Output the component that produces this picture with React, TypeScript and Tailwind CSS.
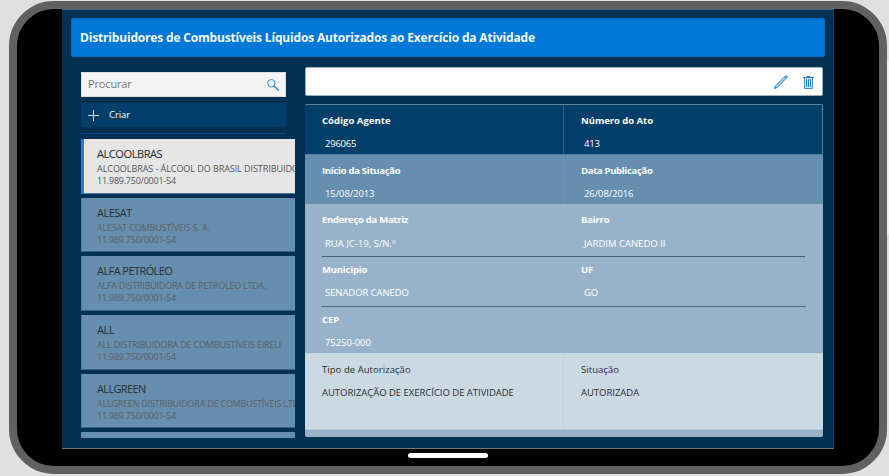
import React from "react";

type Item = { name: string; company: string; nameCls: string; companyCls: string };

const items: Item[] = [
  { name: "ALCOOLBRAS", company: "ALCOOLBRAS - ÁLCOOL DO BRASIL DISTRIBUIDORA", nameCls: "tracking-[-0.42px]", companyCls: "tracking-[-0.06px]" },
  { name: "ALESAT", company: "ALESAT COMBUSTÍVEIS S. A.", nameCls: "tracking-[-0.5px]", companyCls: "tracking-[-0.16px]" },
  { name: "ALFA PETRÓLEO", company: "ALFA DISTRIBUIDORA DE PETRÓLEO LTDA.", nameCls: "tracking-[-0.57px]", companyCls: "tracking-[-0.22px]" },
  { name: "ALL", company: "ALL DISTRIBUIDORA DE COMBUSTÍVEIS EIRELI", nameCls: "tracking-[-0.4px]", companyCls: "tracking-[-0.18px]" },
  { name: "ALLGREEN", company: "ALLGREEN DISTRIBUIDORA DE COMBUSTÍVEIS LTDA.", nameCls: "tracking-[-0.65px]", companyCls: "tracking-[-0.22px]" },
];

function ListItem({ item, selected }: { item: Item; selected: boolean }) {
  return (
    <div
      className={
        "h-[54.7px] shrink-0 overflow-hidden whitespace-nowrap border-b pt-[7px] " +
        (selected
          ? "border-b-[#50809f] border-l-[3px] border-l-[#1a82dc] bg-[#e6e6e6] pl-[13px]"
          : "border-b-[#39658a] border-l border-l-[#4f7ea3] bg-[#668eae] pl-[15px]")
      }
    >
      <div className={"text-[11px] leading-4 " + (selected ? "text-[#222] " : "text-[#2b2f33] ") + item.nameCls}>{item.name}</div>
      <div className={"text-[9px] leading-[13px] " + (selected ? "text-[#555] " : "text-[#5c6167] ") + item.companyCls}>{item.company}</div>
      <div className={"text-[9px] leading-3 tracking-[-0.23px] " + (selected ? "text-[#555]" : "text-[#5c6167]")}>11.989.750/0001-54</div>
    </div>
  );
}

type FieldProps = {
  label: string;
  value: string;
  wide?: boolean;
  divider?: boolean;
  labelCls: string;
  valueCls: string;
};

function Field({ label, value, wide, divider, labelCls, valueCls }: FieldProps) {
  return (
    <div className={(wide ? "w-[259px] " : "flex-1 ") + "pl-[17px] " + (divider ? "border-r border-[#88aac4]/30" : "")}>
      <div className={"text-[9.5px] font-bold leading-4 " + labelCls}>{label}</div>
      <div className={"pl-[3px] text-[9.5px] font-medium leading-4 " + valueCls}>{value}</div>
    </div>
  );
}

export default function App() {
  return (
    <div className="relative h-[476px] w-[889px] overflow-hidden bg-[#e0e0e0] pl-[9px] pt-px font-['Open_Sans','Noto_Sans',sans-serif]">
      <div className="absolute right-0 top-[61px] h-[173px] w-[2px] bg-[#f1f1f1]" />
      <div className="h-[473px] w-[878px] overflow-hidden rounded-[45px] border-8 border-[#616161] bg-black">
        <div className="ml-[45px] flex h-[440px] w-[772px] flex-col border-b border-r border-t border-b-[#777] border-r-[#123f62] border-t-[#456984] bg-[#003052] pl-[9px] pr-[8px] pt-[8px]">
          <header className="flex h-[39px] shrink-0 items-center rounded-[2px] border border-[#0068ba] bg-[#0078d7] pl-[8px] text-[12px] font-bold tracking-[-0.175px] text-[#f3f8fd]">
            Distribuidores de Combustíveis Líquidos Autorizados ao Exercício da Atividade
          </header>
          <div className="flex">
            <aside className="ml-[10px] mt-[15px] w-[214px] shrink-0">
              <div className="flex h-[25px] w-[205px] items-center border border-[#d8dde2] bg-[#f4f4f4] pl-[6px] pr-[5px] text-[11px] text-[#747474]">
                <span className="flex-1 tracking-[-0.15px]">Procurar</span>
                <svg width="14" height="14" viewBox="0 0 14 14" fill="none" stroke="#2f8ad6" strokeWidth="1">
                  <circle cx="5.4" cy="5.2" r="3.7" />
                  <path d="M8.2 8 L13 12.7" strokeWidth="1.3" />
                </svg>
              </div>
              <div className="mt-[6px] flex h-[24px] w-[205px] items-center rounded-[2px] bg-[#003f69] pl-[7px] text-[9.5px] font-medium text-white">
                <svg width="11" height="11" viewBox="0 0 11 11" stroke="#c9d8e3" strokeWidth="1">
                  <path d="M5.5 0V11M0 5.5H11" />
                </svg>
                <span className="ml-[10px] tracking-[-0.1px]">Criar</span>
              </div>
              <div className="mt-[6px] h-px w-[205px] bg-[#004c86]" />
              <div className="mt-[5px] flex h-[299px] flex-col gap-[4px] overflow-hidden">
                {items.map((item, i) => (
                  <ListItem key={item.name} item={item} selected={i === 0} />
                ))}
                <div className="h-[10px] shrink-0 bg-[#668eae]" />
              </div>
            </aside>
            <main className="ml-[10px] mt-[10px] w-[518px]">
              <div className="flex h-[29px] items-center justify-end gap-[15px] rounded-[2px] border border-[#9fb0be] bg-white pr-[8px]">
                <svg width="14" height="14" viewBox="0 0 14 14" fill="#b8d9f3" stroke="#1f80d3" strokeWidth="1">
                  <path d="M.6 13.4 L1 11.5 L11.6 .9 Q12.4 .3 13.1 .9 Q13.7 1.6 13.1 2.4 L2.5 13 Z" />
                  <path d="M10.8 1.7 L12.3 3.2 M1 11.5 L2.5 13" />
                </svg>
                <svg width="11" height="14" viewBox="0 0 11 14">
                  <path d="M1.5 2.5H9.5V13.5H1.5Z" fill="#d5e8f8" stroke="#3a90db" />
                  <path d="M0 2.5H11M4 1.5H7" fill="none" stroke="#1a7dd2" />
                  <path d="M3.5 4V12M5.5 4V12M7.5 4V12" fill="none" stroke="#1a7dd2" />
                </svg>
              </div>
              <div className="mt-[8px] h-[333px] overflow-hidden rounded-[2px] bg-[#98b3c9] text-white">
                <section className="flex h-[50px] border-t border-[#5f829c] bg-[#003f69] shadow-[inset_-1px_0_0_#5f829c]">
                  <Field label="Código Agente" value="296065" wide divider labelCls="pt-[8px] tracking-[0.04px]" valueCls="pt-[7px] tracking-[-0.24px]" />
                  <Field label="Número do Ato" value="413" labelCls="pt-[8px] tracking-[-0.04px]" valueCls="pt-[7px] tracking-[-0.24px]" />
                </section>
                <section className="flex h-[50px] border-t border-[#5280a3] bg-[#668eae]">
                  <Field label="Início da Situação" value="15/08/2013" wide divider labelCls="pt-[8px] tracking-[-0.28px]" valueCls="pt-[7px] tracking-[-0.1px]" />
                  <Field label="Data Publicação" value="26/08/2016" labelCls="pt-[8px] tracking-[-0.32px]" valueCls="pt-[7px] tracking-[-0.1px]" />
                </section>
                <section className="flex h-[52px]">
                  <Field label="Endereço da Matriz" value="RUA JC-19, S/N.º" wide labelCls="pt-[8px] tracking-[-0.28px]" valueCls="pt-[8px]" />
                  <Field label="Bairro" value="JARDIM CANEDO II" labelCls="pt-[8px] tracking-[-0.2px]" valueCls="pt-[8px]" />
                </section>
                <div className="ml-[17px] h-px w-[483px] bg-[#465c6c]" />
                <section className="flex h-[49px]">
                  <Field label="Municipio" value="SENADOR CANEDO" wide labelCls="pt-[5px] tracking-[-0.2px]" valueCls="pt-[7px] tracking-[-0.08px]" />
                  <Field label="UF" value="GO" labelCls="pt-[5px] tracking-[-0.1px]" valueCls="pt-[7px] tracking-[-0.08px]" />
                </section>
                <div className="ml-[16px] h-px w-[485px] bg-[#566d7d]" />
                <section className="flex h-[46px]">
                  <Field label="CEP" value="75250-000" wide labelCls="pt-[5px] tracking-[-0.1px]" valueCls="pt-[7px] tracking-[-0.08px]" />
                </section>
                <section className="flex h-[77px] border-b border-[#b3c7d7] bg-[#cbd9e3] text-[9.5px] leading-4 text-[#2d2d2d]">
                  <div className="w-[259px] border-r border-[#bfd0dc] pl-[17px] pt-[9px]">
                    <div className="font-medium tracking-[0.05px]">Tipo de Autorização</div>
                    <div className="pt-[7px] tracking-[-0.03px]">AUTORIZAÇÃO DE EXERCÍCIO DE ATIVIDADE</div>
                  </div>
                  <div className="flex-1 pl-[17px] pt-[9px]">
                    <div className="font-medium tracking-[0.05px]">Situação</div>
                    <div className="pt-[7px] tracking-[-0.03px]">AUTORIZADA</div>
                  </div>
                </section>
              </div>
            </main>
          </div>
        </div>
        <div className="ml-[391px] mt-[4px] h-[5px] w-[80px] rounded-full bg-white" />
      </div>
    </div>
  );
}
